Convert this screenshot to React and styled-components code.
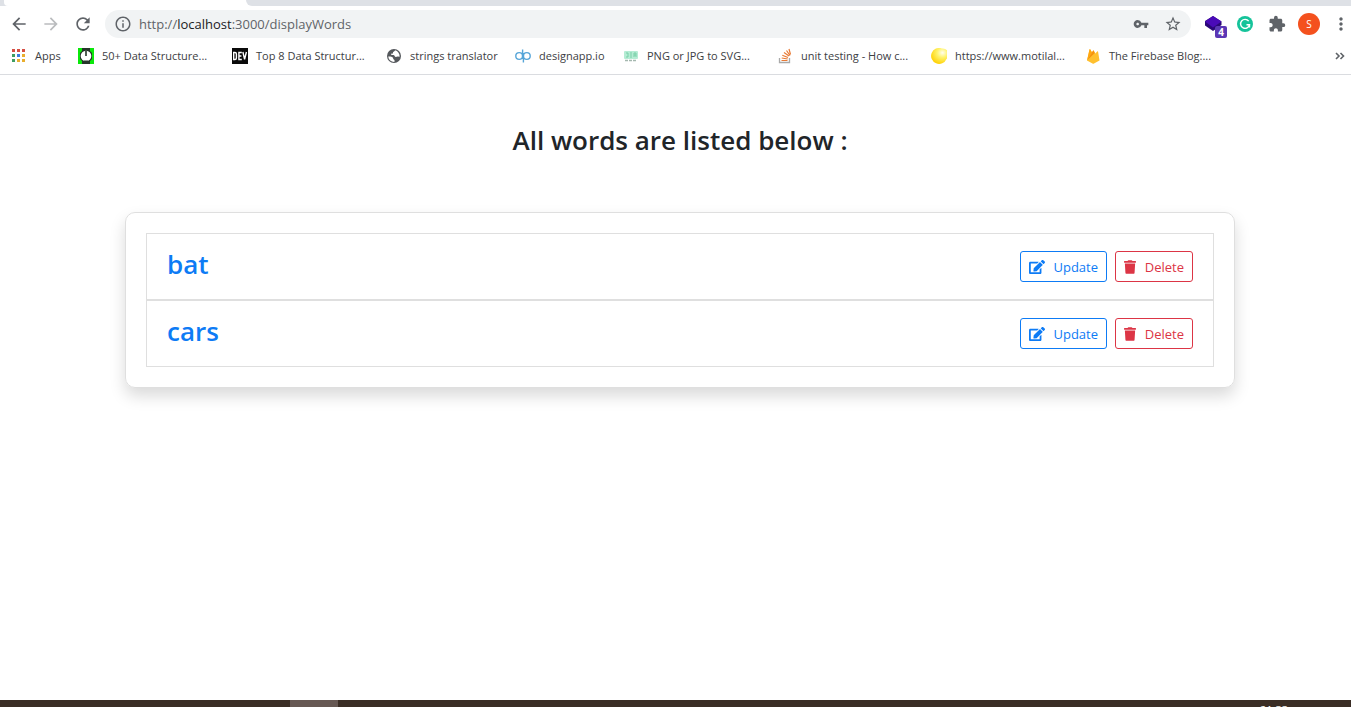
import React from "react";
import styled, { createGlobalStyle } from "styled-components";
import {
  MdArrowBack,
  MdArrowForward,
  MdRefresh,
  MdInfoOutline,
  MdVpnKey,
  MdStarBorder,
  MdExtension,
  MdMoreVert,
} from "react-icons/md";
import { FaEdit, FaTrash } from "react-icons/fa";

const GlobalStyle = createGlobalStyle`
  *, *::before, *::after { box-sizing: border-box; }
  body {
    margin: 0;
    background: #fff;
    color: #212529;
    font-family: "Open Sans", "Noto Sans", sans-serif;
  }
  button, input { font-family: inherit; }
`;

const Screen = styled.div`
  display: flex;
  flex-direction: column;
  height: 100vh;
  overflow: hidden;
`;

const TabStrip = styled.div`
  display: flex;
  flex: none;
  height: 6px;
  background: #dee1e6;
`;

const ActiveTab = styled.div`
  width: 242px;
  margin-left: 4px;
  background: #fff;
  border-radius: 0 0 0 4px;
`;

const StripEnd = styled.div`
  flex: 1;
  background: #dee1e6;
  border-bottom-left-radius: 6px;
`;

const StripWrap = styled.div`
  display: flex;
  flex: 1;
  background: #fff;
`;

const Toolbar = styled.div`
  display: flex;
  flex: none;
  align-items: center;
  height: 36px;
  padding-left: 9px;
  background: #fff;
`;

const IconButton = styled.button`
  display: flex;
  flex: none;
  align-items: center;
  justify-content: center;
  width: ${(p) => p.$width || 32}px;
  height: 28px;
  padding: 0;
  border: 0;
  background: none;
  color: ${(p) => (p.$faded ? "#babcbe" : "#5f6368")};
`;

const NavGroup = styled.div`
  display: flex;
  gap: 12px;
  margin-right: 12px;
`;

const AddressBar = styled.div`
  display: flex;
  flex: 1;
  align-items: center;
  height: 28px;
  padding: 0 2px 0 9px;
  border-radius: 14px;
  background: #f1f3f4;
  color: #5f6368;
`;

const Address = styled.a`
  flex: 1;
  margin-left: 7px;
  color: #5f6368;
  font-size: 13px;
  line-height: 20px;
  text-decoration: none;
`;

const Host = styled.span`
  color: #202124;
`;

const Extensions = styled.div`
  display: flex;
  align-items: center;
  margin-left: 6px;
`;

const MenuButton = styled(IconButton)`
  justify-content: flex-end;
`;

const Avatar = styled.span`
  display: flex;
  align-items: center;
  justify-content: center;
  width: 22px;
  height: 22px;
  border-radius: 50%;
  background: #f4511e;
  color: #fff;
  font-size: 10px;
`;

const BookmarkBar = styled.nav`
  display: flex;
  flex: none;
  align-items: center;
  height: 33px;
  padding: 0 3px 5px 10px;
  border-bottom: 1px solid #dadce0;
`;

const Bookmark = styled.a`
  display: flex;
  flex: none;
  align-items: center;
  gap: 8px;
  width: ${(p) => p.$width}px;
  color: #3c4043;
  font-size: 11px;
  line-height: 16px;
  white-space: nowrap;
  text-decoration: none;

  svg { flex: none; }
`;

const Overflow = styled(IconButton)`
  margin-left: auto;
`;

const Page = styled.main`
  flex: 1;
  padding: 45px 116px 0 125px;
`;

const Title = styled.h1`
  margin: 0 0 52px;
  font-size: 26px;
  font-weight: 600;
  line-height: 40px;
  text-align: center;
`;

const Card = styled.section`
  padding: 20px;
  border: 1px solid #dfdfdf;
  border-radius: 10px;
  box-shadow: 0 8px 16px rgba(0, 0, 0, 0.15);
`;

const WordList = styled.ul`
  margin: 0;
  padding: 0;
  list-style: none;
`;

const WordRow = styled.li`
  display: flex;
  align-items: center;
  gap: 8px;
  height: 67px;
  padding: 0 20px;
  border: 1px solid #dfdfdf;
`;

const Word = styled.a`
  flex: 1;
  padding-bottom: 6px;
  color: #0d7bf5;
  font-size: 26px;
  font-weight: 600;
  line-height: 32px;
  text-decoration: none;
`;

const ActionButton = styled.button`
  display: flex;
  align-items: center;
  justify-content: space-between;
  width: ${(p) => (p.$danger ? 78 : 87)}px;
  height: 31px;
  padding: 0 8px;
  border: 1px solid currentColor;
  border-radius: 3px;
  background: #fff;
  color: ${(p) => (p.$danger ? "#dc3545" : "#0d7bf5")};
  font-size: 13px;
  line-height: 20px;

  svg { width: ${(p) => (p.$danger ? 12 : 16)}px; }
`;

const Taskbar = styled.footer`
  display: flex;
  flex: none;
  height: 7px;
  padding-left: 290px;
  overflow: hidden;
  background: #3a2d25;
`;

const ActiveApp = styled.div`
  width: 48px;
  background: #665853;
`;

const Clock = styled.time`
  margin: 3px 63px 0 auto;
  color: #fff;
  font-size: 11px;
  line-height: 14px;
`;

const AppsIcon = () => (
  <svg width="17" height="16" viewBox="0 0 17 16">
    {["#d64f43", "#d64f43", "#d64f43", "#3f9e62", "#3c7de0", "#e9ae2e", "#3f9e62", "#e9ae2e", "#e9ae2e"].map((c, i) => (
      <rect key={i} x={2 + (i % 3) * 5} y={1 + Math.floor(i / 3) * 5} width="3" height="3" fill={c} />
    ))}
  </svg>
);

const ClockIcon = () => (
  <svg width="16" height="16" viewBox="0 0 16 16">
    <rect width="16" height="16" fill="#0be80b" />
    <path d="M4 0h8v3l2 2v6l-2 2v3H4v-3l-2-2V5l2-2z" fill="#26352a" />
    <circle cx="8" cy="8" r="5.300" fill="#fff" />
    <path d="M7.200 3h1.600v5H7.200zM5.500 12.500h5l-1 1.500h-3z" fill="#26352a" />
  </svg>
);

const DevIcon = () => (
  <svg width="16" height="16" viewBox="0 0 16 16" fill="none" stroke="#fff" strokeWidth="1.400">
    <rect width="16" height="16" fill="#0a0a0a" stroke="none" />
    <path d="M1.700 4.500v7h1.300q1.400 0 1.400-1.500V6q0-1.500-1.400-1.500zM9.800 4.500H6.900v7h2.900M6.900 8h2.500M10.900 4l1.700 7.300L14.400 4" />
  </svg>
);

const GlobeIcon = () => (
  <svg width="16" height="16" viewBox="0 0 16 16">
    <circle cx="8" cy="8" r="7" fill="#54575b" />
    <path d="M9 2.300c-.2 1.200-1.200 1.200-1.800 1.700-.5.500.2 1.200-.6 1.600-.7.300-1.300 0-1.500.7-.2.800 1.200.7 2.400.8 1.200.1 1 1.800 2.200 2 .9.100 1.300-.7 2.200-.5l1.700.2A6 6 0 0 0 9 2.300z" fill="#fff" />
    <path d="M2.200 8.500c1.600-.3 3.500 0 4.500 1 .7.700.3 1.700 1.200 2.100.8.400.8 1.300.5 2.300A5.900 5.900 0 0 1 2.200 8.500z" fill="#fff" />
  </svg>
);

const DpIcon = () => (
  <svg width="16" height="16" viewBox="0 0 16 16" fill="none" stroke="#56a5d8" strokeWidth="1.400">
    <circle cx="4.200" cy="8" r="3.400" />
    <circle cx="11.800" cy="8" r="3.400" />
    <path d="M7.600 1.500V11M8.400 5v9.500" />
  </svg>
);

const PngIcon = () => (
  <svg width="16" height="16" viewBox="0 0 16 16">
    <rect x="1" y="3" width="14" height="8" rx="1" fill="#b5ecd4" />
    <path d="M3 5h2v4H3M7 5h2M7 7h2M7 9h2M11 9V5h2v4M11 7h2" fill="none" stroke="#79cfa8" />
    <path d="M2 12.500h12" stroke="#a5b8af" strokeWidth="1.500" strokeDasharray="3 1" />
  </svg>
);

const StackIcon = () => (
  <svg width="16" height="16" viewBox="0 0 16 16" fill="none">
    <path d="M2.500 10v4.500h10V10" stroke="#a9a9a9" strokeWidth="1.300" />
    <path d="M4.500 12.500h6M4.700 10l6 1M5.300 7.300l5.700 2.200M7 4.500l5 3.500M9.500 2.500l3.500 5M12 1l1.500 5.500" stroke="#e87a35" strokeWidth="1.200" />
  </svg>
);

const MoonIcon = () => (
  <svg width="16" height="16" viewBox="0 0 16 16">
    <defs>
      <radialGradient id="glow" cx=".65" cy=".3" r=".75">
        <stop offset="0" stopColor="#fffef0" />
        <stop offset=".4" stopColor="#fff36b" />
        <stop offset="1" stopColor="#ffcf00" />
      </radialGradient>
    </defs>
    <path d="M11 .5a8 8 0 1 0 4.500 10.500A6 6 0 0 0 11 .5z" fill="url(#glow)" />
  </svg>
);

const FirebaseIcon = () => (
  <svg width="16" height="16" viewBox="0 0 16 16">
    <path d="M2 12.500L4.500 1.500c.1-.4.600-.5.800-.1L7 4.500l1-1.800c.2-.4.600-.4.800 0l1.400 2.700 2.100-2c.3-.3.700-.1.800.3L14.500 12.500 9 15.600c-.5.3-1 .3-1.500 0z" fill="#ffc02e" />
    <path d="M2 12.500L4.500 1.500c.1-.4.600-.5.800-.1L7 4.500z" fill="#ffa712" />
    <path d="M2 12.500L8 2.700c.2-.4.600-.4.800 0L9.800 5z" fill="#f5930f" />
  </svg>
);

const ChevronsIcon = () => (
  <svg width="10" height="8" viewBox="0 0 10 8" fill="none" stroke="#5f6368" strokeWidth="1.600">
    <path d="M1 1l3 3-3 3M5.500 1l3 3-3 3" />
  </svg>
);

const LayersIcon = () => (
  <svg width="28" height="28" viewBox="0 0 28 28">
    <path d="M14 6l8.500 5.500v3.500L14 21l-8-5.500V11z" fill="#2b0777" />
    <path d="M14 6l8.500 5.500L14 17.500 6 11.500z" fill="#4a0ab8" />
    <rect x="16" y="16" width="12" height="12" rx="2" fill="#5b37b5" />
    <text x="22" y="25.500" fill="#fff" fontSize="10" fontWeight="700" textAnchor="middle">4</text>
  </svg>
);

const GrammarIcon = () => (
  <svg width="16" height="16" viewBox="0 0 16 16">
    <circle cx="8" cy="8" r="8" fill="#15c39a" />
    <path d="M11.700 5.200A4.500 4.500 0 1 0 12.500 8.800H9.500M12.500 8.500v3" fill="none" stroke="#fff" strokeWidth="1.400" />
  </svg>
);

const bookmarks = [
  { label: "Apps", width: 68, icon: <AppsIcon /> },
  { label: "50+ Data Structure...", width: 154, icon: <ClockIcon /> },
  { label: "Top 8 Data Structur...", width: 154, icon: <DevIcon /> },
  { label: "strings translator", width: 129, icon: <GlobeIcon /> },
  { label: "designapp.io", width: 108, icon: <DpIcon /> },
  { label: "PNG or JPG to SVG...", width: 154, icon: <PngIcon /> },
  { label: "unit testing - How c...", width: 154, icon: <StackIcon /> },
  { label: "https://www.motilal...", width: 154, icon: <MoonIcon /> },
  { label: "The Firebase Blog:...", width: 154, icon: <FirebaseIcon /> },
];

const words = ["bat", "cars"];

export default function App() {
  return (
    <Screen>
      <GlobalStyle />
      <TabStrip>
        <ActiveTab />
        <StripWrap>
          <StripEnd />
        </StripWrap>
      </TabStrip>
      <Toolbar>
        <NavGroup>
          <IconButton $width={20} aria-label="Back"><MdArrowBack size={20} /></IconButton>
          <IconButton $width={20} $faded aria-label="Forward"><MdArrowForward size={20} /></IconButton>
          <IconButton $width={20} aria-label="Reload"><MdRefresh size={20} /></IconButton>
        </NavGroup>
        <AddressBar>
          <MdInfoOutline size={18} />
          <Address href="#address">
            http://<Host>localhost</Host>:3000/displayWords
          </Address>
          <IconButton aria-label="Passwords"><MdVpnKey size={16} /></IconButton>
          <IconButton aria-label="Bookmark this page"><MdStarBorder size={18} /></IconButton>
        </AddressBar>
        <Extensions>
          <IconButton aria-label="Layers"><LayersIcon /></IconButton>
          <IconButton aria-label="Writing assistant"><GrammarIcon /></IconButton>
          <IconButton aria-label="Extensions"><MdExtension size={18} /></IconButton>
          <IconButton aria-label="Profile"><Avatar>S</Avatar></IconButton>
          <MenuButton $width={26} aria-label="Menu"><MdMoreVert size={20} /></MenuButton>
        </Extensions>
      </Toolbar>
      <BookmarkBar>
        {bookmarks.map((b) => (
          <Bookmark key={b.label} href="#bookmark" $width={b.width}>
            {b.icon}
            {b.label}
          </Bookmark>
        ))}
        <Overflow $width={16} aria-label="More bookmarks"><ChevronsIcon /></Overflow>
      </BookmarkBar>
      <Page>
        <Title>All words are listed below :</Title>
        <Card>
          <WordList>
            {words.map((word) => (
              <WordRow key={word}>
                <Word href={`#${word}`}>{word}</Word>
                <ActionButton><FaEdit size={16} />Update</ActionButton>
                <ActionButton $danger><FaTrash size={14} />Delete</ActionButton>
              </WordRow>
            ))}
          </WordList>
        </Card>
      </Page>
      <Taskbar>
        <ActiveApp />
        <Clock>21:33</Clock>
      </Taskbar>
    </Screen>
  );
}
